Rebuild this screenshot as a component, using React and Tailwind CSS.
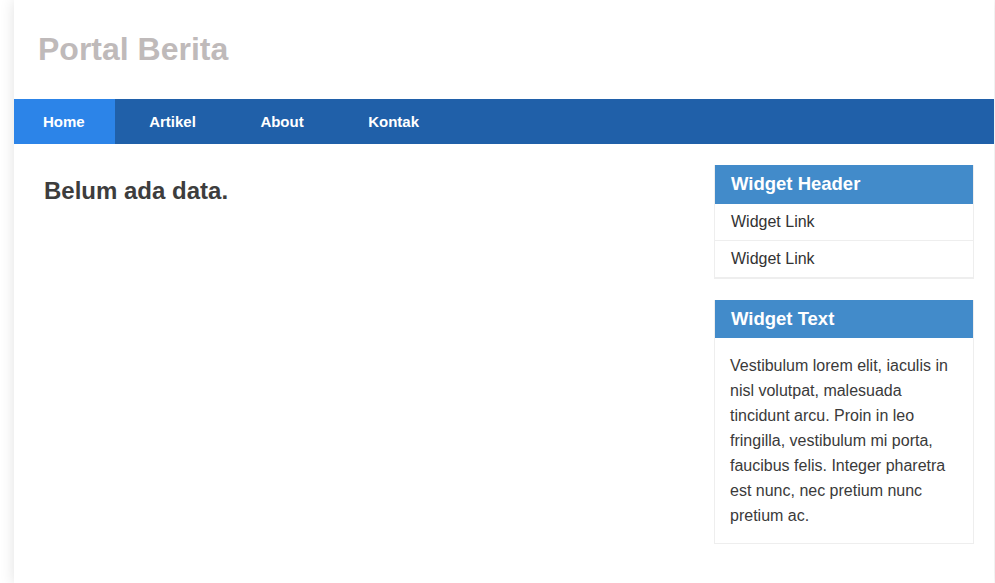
import React from 'react'

const NAV = ['Home', 'Artikel', 'About', 'Kontak']

const LINKS = ['Widget Link', 'Widget Link']

function WidgetHeader({ children }) {
    return (
        <div className="h-[38.5px] flex items-center px-[16px] bg-[#428bca] text-white font-bold text-[18.5px]">
            {children}
        </div>
    )
}

export default function App() {
    return (
        <div className="min-h-screen bg-white font-['Liberation_Sans',Arial,sans-serif]">
            <div className="ml-[14px] w-[980px] min-h-[583px] bg-white shadow-[0_0_14px_rgba(0,0,0,0.12)]">
                <header className="h-[99px] pl-[24px] pt-[31px]">
                    <h1 className="text-[32px] leading-[37px] font-bold text-[#bfbaba]">Portal Berita</h1>
                </header>

                <nav className="h-[45px] flex gap-[4.5px] bg-[#2060a9]">
                    {NAV.map((item, i) => (
                        <a
                            key={item}
                            href="#"
                            className={`h-full flex items-center pt-[2px] px-[30px] text-[15px] font-bold text-white ${
                                i === 0 ? 'bg-[#2c84e8] pl-[29px]' : ''
                            }`}
                        >
                            {item}
                        </a>
                    ))}
                </nav>

                <div className="flex">
                    <main className="flex-1 pl-[30px] pt-[33px]">
                        <h2 className="text-[24px] leading-[28px] font-bold text-[#3d3d3d]">Belum ada data.</h2>
                    </main>

                    <aside className="w-[260px] mr-[20px] mt-[21px] pb-[40px]">
                        <div className="border-x border-b border-[#eeeeee] mb-[21px]">
                            <WidgetHeader>Widget Header</WidgetHeader>
                            {LINKS.map((l, i) => (
                                <a
                                    key={i}
                                    href="#"
                                    className="h-[37px] flex items-center px-[16px] border-b border-[#eeeeee] text-[16px] text-[#333333]"
                                >
                                    {l}
                                </a>
                            ))}
                        </div>

                        <div className="border-x border-b border-[#eeeeee]">
                            <WidgetHeader>Widget Text</WidgetHeader>
                            <p className="px-[15px] py-[15px] text-[16px] leading-[25px] text-[#3a3a3a]">
                                Vestibulum lorem elit, iaculis in nisl volutpat, malesuada tincidunt arcu. Proin in leo
                                fringilla, vestibulum mi porta, faucibus felis. Integer pharetra est nunc, nec pretium
                                nunc pretium ac.
                            </p>
                        </div>
                    </aside>
                </div>
            </div>
        </div>
    )
}
